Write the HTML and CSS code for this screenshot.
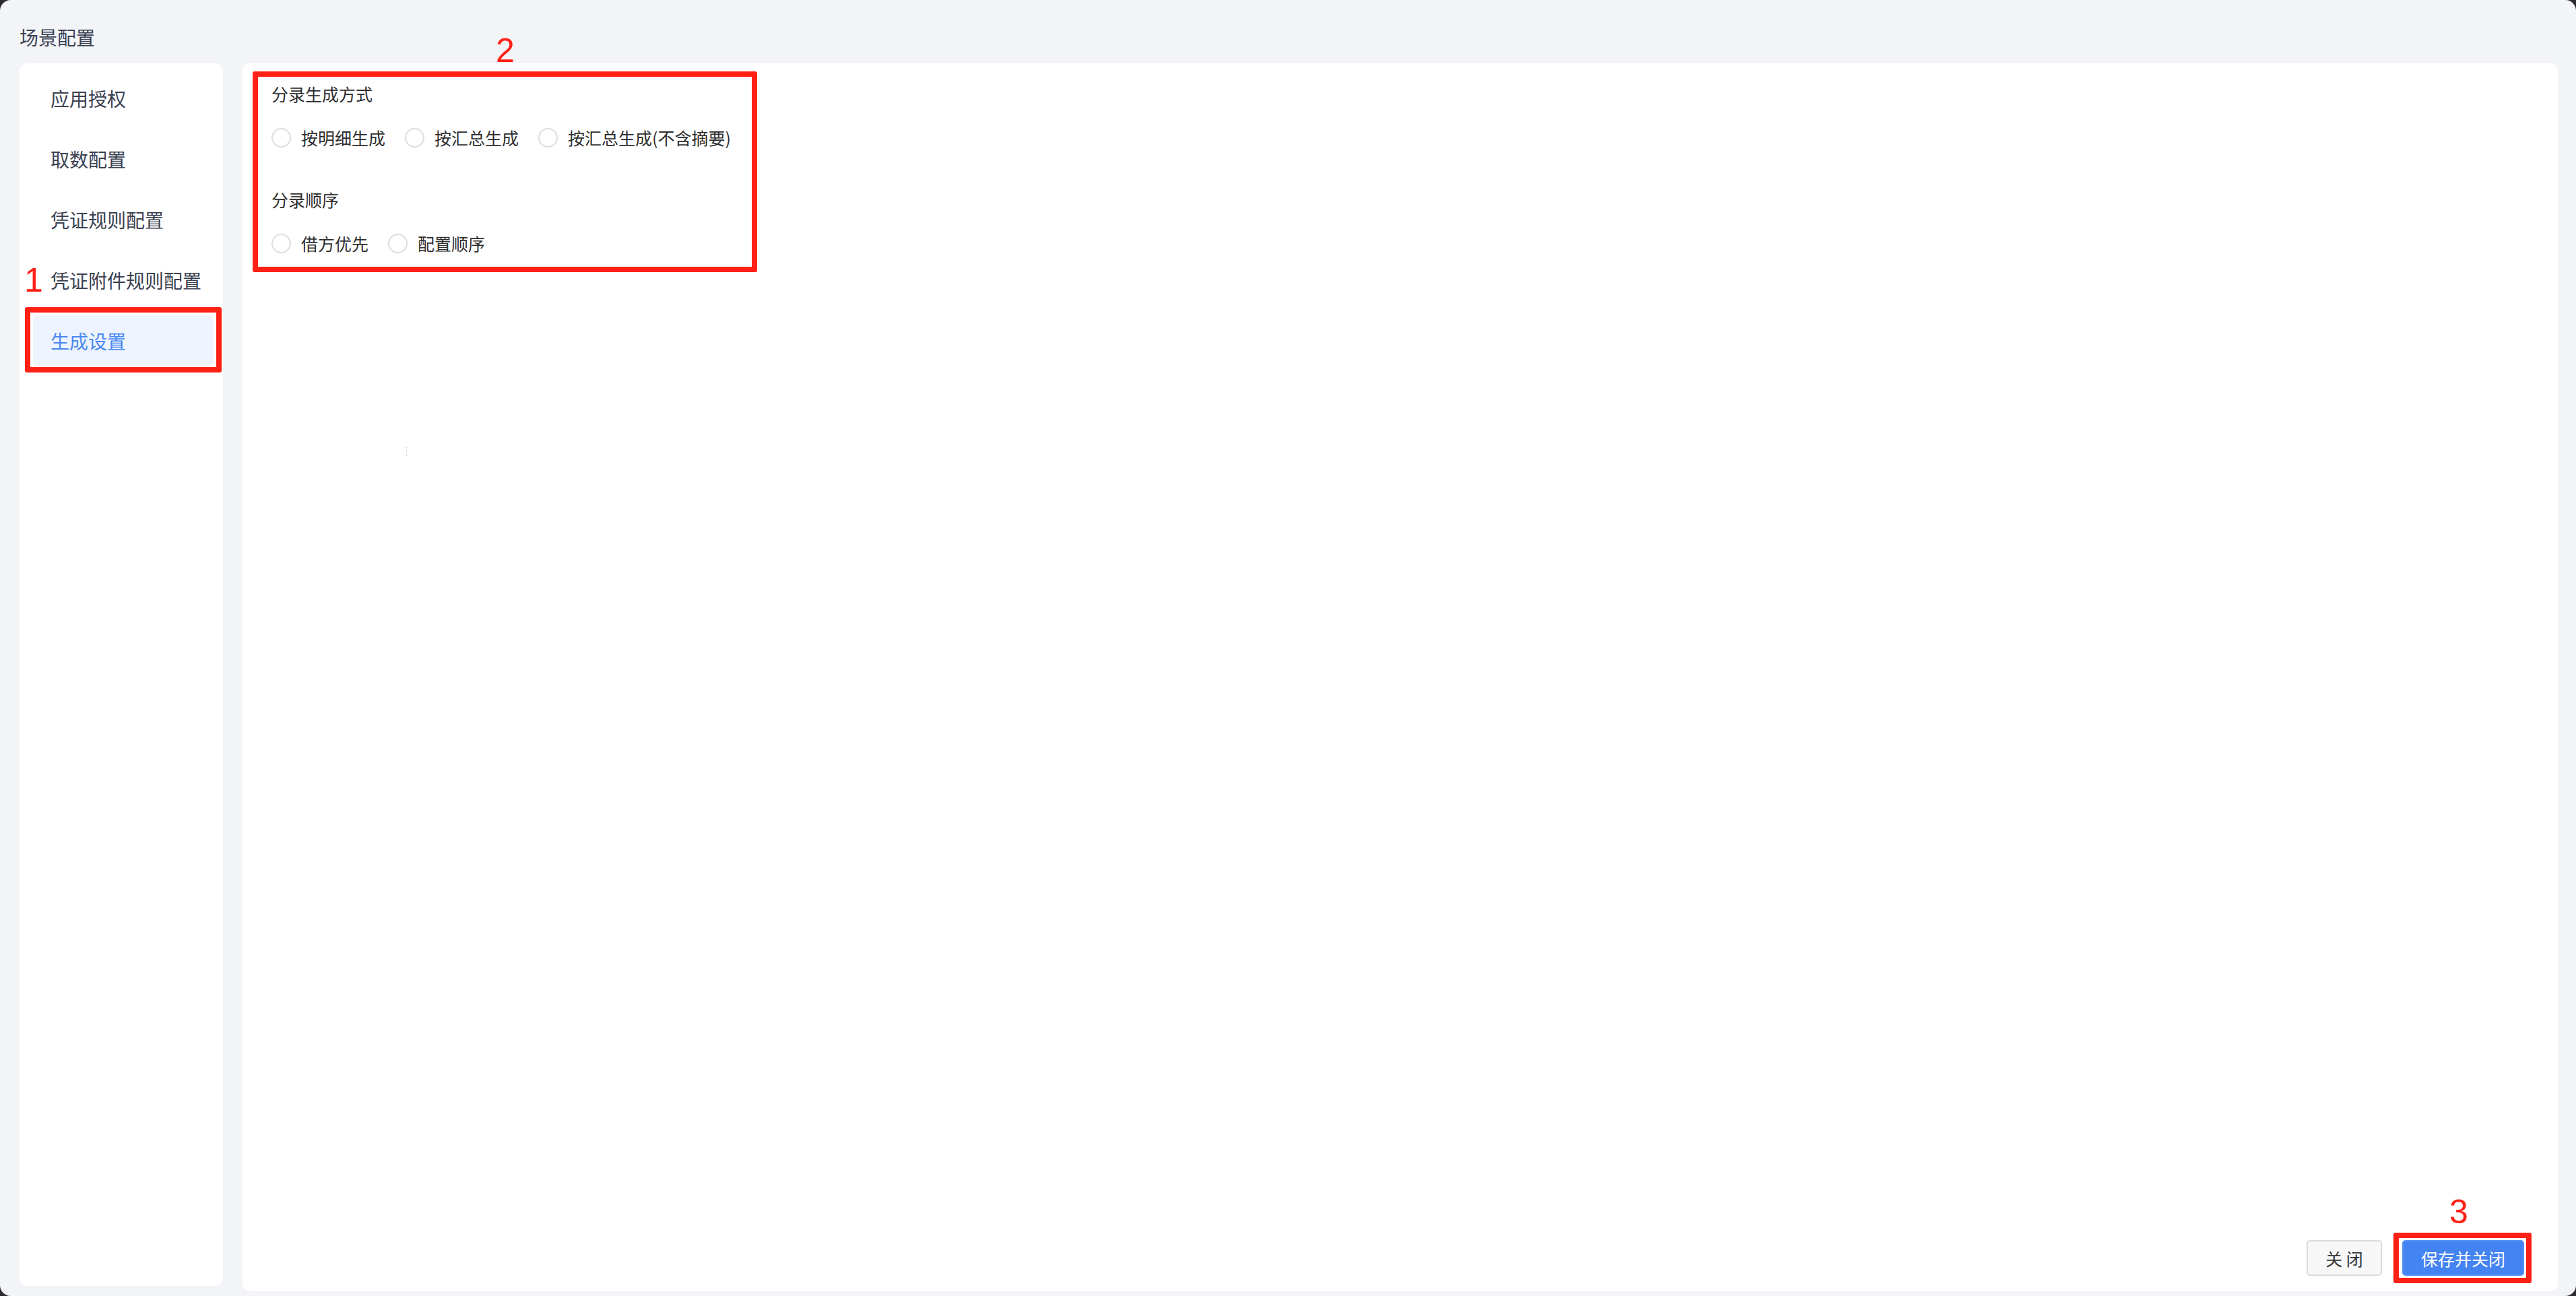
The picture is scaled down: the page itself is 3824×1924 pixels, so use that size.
FILE: index.html
```html
<!DOCTYPE html>
<html lang="zh-CN">
<head>
<meta charset="utf-8">
<title>场景配置</title>
<link rel="stylesheet" href="styles.css">
</head>
<body>
<div class="window">
  <header class="win-header">场景配置</header>
  <div class="win-body">
    <nav class="sidebar">
      <div class="nav-item">应用授权</div>
      <div class="nav-item">取数配置</div>
      <div class="nav-item">凭证规则配置</div>
      <div class="nav-item">凭证附件规则配置</div>
      <div class="nav-item active">生成设置</div>
    </nav>
    <main class="main-card">
      <section class="form">
        <div class="field-title">分录生成方式</div>
        <div class="radio-row">
          <label class="radio"><span class="circle"></span><span class="radio-text">按明细生成</span></label>
          <label class="radio"><span class="circle"></span><span class="radio-text">按汇总生成</span></label>
          <label class="radio"><span class="circle"></span><span class="radio-text">按汇总生成(不含摘要)</span></label>
        </div>
        <div class="field-title second">分录顺序</div>
        <div class="radio-row">
          <label class="radio"><span class="circle"></span><span class="radio-text">借方优先</span></label>
          <label class="radio"><span class="circle"></span><span class="radio-text">配置顺序</span></label>
        </div>
      </section>
      <div class="cursor-mark"></div>
      <footer class="footer">
        <button class="btn btn-default">关 闭</button>
        <div class="save-wrap">
          <button class="btn btn-primary">保存并关闭</button>
        </div>
      </footer>
    </main>
  </div>

  <!-- annotations -->
  <div class="anno-box box1"></div>
  <div class="anno-num num1">1</div>
  <div class="anno-box box2"></div>
  <div class="anno-num num2">2</div>
  <div class="anno-box box3"></div>
  <div class="anno-num num3">3</div>
</div>
</body>
</html>
```

FILE: styles.css
```css
html, body {
  margin: 0;
  padding: 0;
  width: 3824px;
  height: 1924px;
  background: #2c2c2c;
  overflow: hidden;
}

.window {
  position: relative;
  box-sizing: border-box;
  width: 3824px;
  height: 1924px;
  background: #f3f4f8;
  border-radius: 16px;
  display: flex;
  flex-direction: column;
  font-family: "Noto Sans CJK SC", "Noto Sans", sans-serif;
}

.win-header {
  height: 94px;
  box-sizing: border-box;
  padding: 35px 0 0 29px;
  font-size: 28px;
  line-height: 40px;
  color: #3a4151;
}

.win-body {
  display: flex;
  align-items: flex-start;
  gap: 29px;
  padding: 0 27px 0 29px;
}

.sidebar {
  box-sizing: border-box;
  width: 302px;
  height: 1815px;
  background: #ffffff;
  border-radius: 12px;
  padding: 15px 14px 0 20px;
  display: flex;
  flex-direction: column;
  gap: 15px;
}

.nav-item {
  height: 75px;
  line-height: 75px;
  padding-left: 26px;
  font-size: 28px;
  color: #3a4151;
  border-radius: 6px;
  white-space: nowrap;
}

.nav-item.active {
  background: #edf4ff;
  color: #4a88f2;
}

.main-card {
  position: relative;
  box-sizing: border-box;
  width: 3437px;
  height: 1823px;
  background: #ffffff;
  border-radius: 12px;
  display: flex;
  flex-direction: column;
  padding: 25px 50px 23px 43px;
}

.form {
  display: flex;
  flex-direction: column;
  color: #2e2e2e;
  font-size: 25px;
}

.field-title {
  line-height: 40px;
  height: 40px;
}

.field-title.second {
  margin-top: 52px;
}

.radio-row {
  display: flex;
  align-items: center;
  gap: 29px;
  margin-top: 25px;
  height: 40px;
}

.radio {
  display: flex;
  align-items: center;
  gap: 15px;
  line-height: 40px;
}

.circle {
  box-sizing: border-box;
  width: 29px;
  height: 29px;
  border: 2px solid #dedede;
  border-radius: 50%;
  background: #fff;
}

.cursor-mark {
  position: absolute;
  left: 243px;
  top: 569px;
  width: 0;
  height: 14px;
  border-left: 1px dotted #d0d0d0;
}

.footer {
  margin-top: auto;
  display: flex;
  justify-content: flex-end;
  align-items: center;
  gap: 30px;
}

.btn {
  box-sizing: border-box;
  height: 53px;
  border-radius: 5px;
  font-family: "Noto Sans CJK SC", "Noto Sans", sans-serif;
  font-size: 25px;
  padding: 0;
  cursor: pointer;
}

.btn-default {
  width: 112px;
  background: #f7f7f7;
  border: 2px solid #dcdcdc;
  color: #333333;
}

.btn-primary {
  width: 181px;
  background: #4383f2;
  border: 2px solid #5a93f4;
  color: #ffffff;
}

.save-wrap {
  display: flex;
}

/* red annotation overlays */
.anno-box {
  position: absolute;
  box-sizing: border-box;
  border: 8px solid #ff2015;
  border-radius: 3px;
}

.box1 { left: 37px; top: 456px; width: 292px; height: 97px; }
.box2 { left: 375px; top: 106px; width: 749px; height: 298px; }
.box3 { left: 3553px; top: 1830px; width: 205px; height: 75px; }

.anno-num {
  position: absolute;
  font-family: "Liberation Sans", "Noto Sans", sans-serif;
  font-size: 50px;
  line-height: 50px;
  color: #ff2015;
}

.num1 { left: 36px; top: 391px; }
.num2 { left: 736px; top: 50px; }
.num3 { left: 3636px; top: 1774px; }
```
